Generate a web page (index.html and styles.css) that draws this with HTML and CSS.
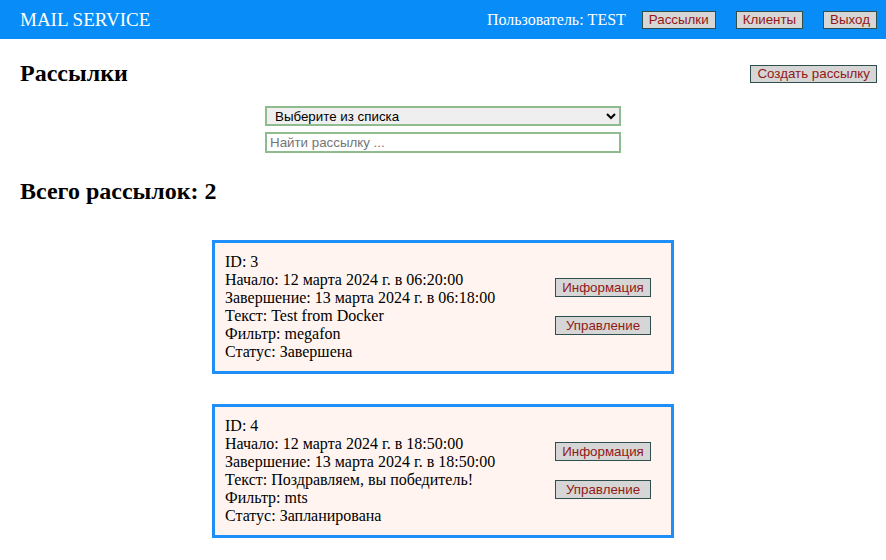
FILE: index.html
```html
<!DOCTYPE html>
<html lang="ru">
<head>
<meta charset="utf-8">
<link rel="stylesheet" href="styles.css">
</head>
<body>
<header class="topbar">
  <div class="brand">MAIL SERVICE</div>
  <nav class="nav">
    <span class="user">Пользователь: TEST</span>
    <button class="btn">Рассылки</button>
    <button class="btn">Клиенты</button>
    <button class="btn">Выход</button>
  </nav>
</header>
<main class="content">
  <div class="title-row">
    <h2 class="title">Рассылки</h2>
    <button class="btn">Создать рассылку</button>
  </div>
  <div class="filters">
    <select class="field select"><option>Выберите из списка</option></select>
    <input class="field input" type="text" placeholder="Найти рассылку ...">
  </div>
  <h2 class="total">Всего рассылок: 2</h2>
  <div class="cards">
    <div class="card">
      <div class="info">
        <div>ID: 3</div>
        <div>Начало: 12 марта 2024 г. в 06:20:00</div>
        <div>Завершение: 13 марта 2024 г. в 06:18:00</div>
        <div>Текст: Test from Docker</div>
        <div>Фильтр: megafon</div>
        <div>Статус: Завершена</div>
      </div>
      <div class="actions">
        <button class="btn wide">Информация</button>
        <button class="btn wide">Управление</button>
      </div>
    </div>
    <div class="card">
      <div class="info">
        <div>ID: 4</div>
        <div>Начало: 12 марта 2024 г. в 18:50:00</div>
        <div>Завершение: 13 марта 2024 г. в 18:50:00</div>
        <div>Текст: Поздравляем, вы победитель!</div>
        <div>Фильтр: mts</div>
        <div>Статус: Запланирована</div>
      </div>
      <div class="actions">
        <button class="btn wide">Информация</button>
        <button class="btn wide">Управление</button>
      </div>
    </div>
  </div>
</main>
</body>
</html>
```
FILE: styles.css
```css
* { box-sizing: border-box; }
body {
  margin: 0;
  font-family: "Liberation Serif", "Times New Roman", serif;
  font-size: 16px;
  color: #000;
  background: #fff;
}
.topbar {
  height: 39px;
  background: #088df8;
  display: flex;
  align-items: center;
  justify-content: space-between;
  padding: 0 9px 0 20px;
  color: #fff;
}
.brand { font-size: 19px; }
.nav { display: flex; align-items: center; gap: 20px; }
.user { font-size: 16px; margin-right: -4px; }
.btn {
  font-family: "Liberation Sans", Arial, sans-serif;
  font-size: 13.33px;
  color: #931818;
  background: #d6d6d6;
  border: 1px solid #2f4f4f;
  padding: 0 6px;
  height: 18px;
  line-height: 16px;
  margin: 0;
}
.content { padding: 0 9px 0 20px; }
.title-row {
  display: flex;
  justify-content: space-between;
  align-items: center;
  height: 69px;
}
.title { margin: 0; font-size: 24px; font-weight: bold; }
.filters {
  display: flex;
  flex-direction: column;
  align-items: center;
  gap: 6px;
  margin-left: -11px;
  margin-top: -2px;
}
.field {
  width: 356px;
  border: 2px solid #8fbc8f;
  font-family: "Liberation Sans", Arial, sans-serif;
  font-size: 13.33px;
  margin: 0;
}
.select { height: 20px; background: #efefef; padding: 0 4px; color: #000; }
.input { height: 21px; padding: 0 3px; }
.input::placeholder { color: #757575; }
.total { margin: 25px 0 0; font-size: 24px; font-weight: bold; }
.cards {
  display: flex;
  flex-direction: column;
  align-items: center;
  gap: 30px;
  margin: 35px 0 0 -11px;
}
.card {
  width: 462px;
  height: 134px;
  border: 3px solid #1e8ef8;
  background: #fff4ef;
  display: flex;
  justify-content: space-between;
  align-items: center;
  padding: 9px 20px 10px 10px;
}
.info { line-height: 18px; align-self: flex-start; margin-top: 1px; }
.actions {
  display: flex;
  flex-direction: column;
  gap: 19px;
  margin-top: 0;
}
.wide { width: 96px; height: 19px; line-height: 17px; }
```
